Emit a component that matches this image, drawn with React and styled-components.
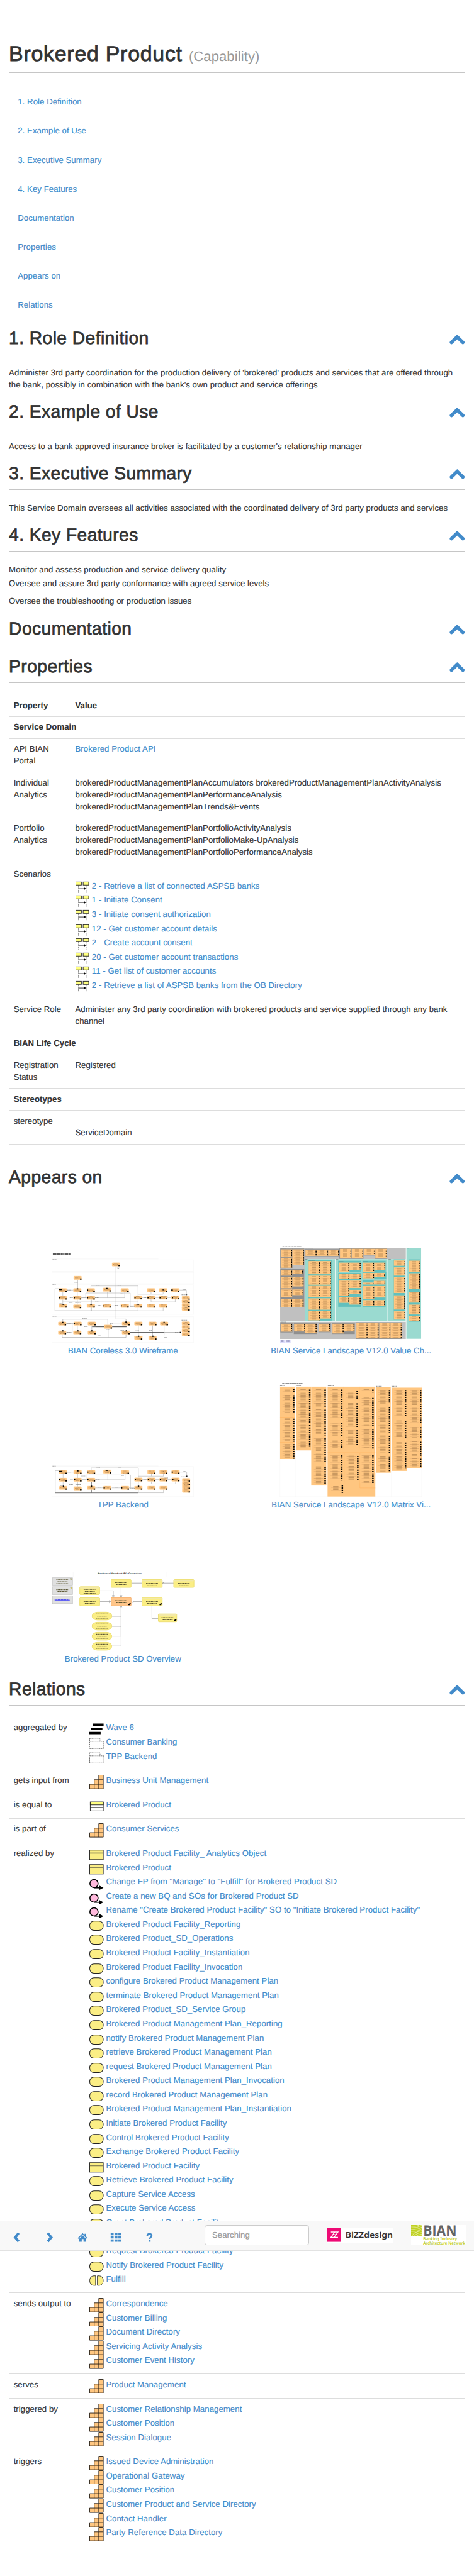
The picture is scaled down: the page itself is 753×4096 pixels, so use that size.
import React from "react";
import styled, { createGlobalStyle } from "styled-components";

const LINK = "#428bca";
const INK = "#333";
const NODE = "#ffc680";

const GlobalStyle = createGlobalStyle`
  body {
    margin: 0;
    background: #fff;
    color: ${INK};
    font-family: "Liberation Sans", Arial, sans-serif;
    font-size: 14px;
    line-height: 20px;
    letter-spacing: 0.08px;
    text-rendering: geometricPrecision;
    -webkit-text-stroke: 0.15px currentColor;
  }
  * { box-sizing: border-box; }
`;

const Page = styled.main`
  position: relative;
  zoom: 0.94125;
  width: 800px;
  min-height: 4352px;
  padding: 72.5px 15px 0;
  overflow: hidden;
`;

const Title = styled.h1`
  margin: 0;
  height: 50.5px;
  border-bottom: 1px solid #c6c6c6;
  font-size: 36px;
  line-height: 40px;
  font-weight: 400;
  letter-spacing: 0.8px;
  -webkit-text-stroke: 0.9px ${INK};
`;

const TitleKind = styled.small`
  font-size: 23.4px;
  line-height: 1;
  letter-spacing: 0.1px;
  color: #999;
  -webkit-text-stroke: 0;
`;

const SectionNav = styled.nav`
  display: flex;
  flex-direction: column;
  padding: 25px 15px 14.8px;
`;

const NavLink = styled.a`
  line-height: 49px;
  color: ${LINK};
  text-decoration: none;
`;

const SectionHeader = styled.header`
  display: flex;
  justify-content: space-between;
  align-items: flex-start;
  margin-top: ${(p) => p.$gap || 0}px;
  padding-bottom: 11px;
  border-bottom: 1px solid #c6c6c6;
`;

const SectionTitle = styled.h2`
  margin: 0;
  font-size: 30px;
  line-height: 33px;
  font-weight: 400;
  letter-spacing: 0.45px;
  -webkit-text-stroke: 0.8px ${INK};
`;

const Chevron = styled.svg`
  width: 26px;
  height: 17px;
  margin: 10px 0.5px 0 0;
`;

const Copy = styled.div`
  padding: 20.6px 0 18.4px;
  white-space: nowrap;
`;

const Line = styled.p`
  margin: ${(p) => p.$before || 0}px 0 0;
`;

const Table = styled.div`
  display: flex;
  flex-direction: column;
  margin-top: 20px;
`;

const Row = styled.div`
  display: grid;
  grid-template-columns: ${(p) => p.$label}px 1fr;
  padding: 8px 0;
  border-bottom: 1px solid #ddd;
`;

const Cell = styled.div`
  padding: 0 8px;
  font-weight: ${(p) => (p.$strong ? 700 : 400)};
  white-space: ${(p) => (p.$nowrap ? "nowrap" : "normal")};
`;

const GroupRow = styled.div`
  padding: 8px;
  border-bottom: 1px solid #ddd;
  font-weight: 700;
`;

const Link = styled.a`
  color: ${LINK};
  text-decoration: none;
`;

const ItemList = styled.ul`
  list-style: none;
  margin: ${(p) => p.$top || 0}px 0 0;
  padding: 0;
`;

const Item = styled.li`
  display: flex;
  gap: 4px;
  height: 24px;
  white-space: nowrap;
`;

const IconBox = styled.svg`
  flex: none;
  width: 24px;
  height: 24px;
`;

const Gallery = styled.div`
  display: grid;
  grid-template-columns: 1fr 1fr;
  grid-auto-rows: 260px;
  padding: 15.3px 0 23.7px;
`;

const Figure = styled.figure`
  display: flex;
  flex-direction: column;
  align-items: center;
  justify-content: flex-end;
  gap: 4px;
  margin: 0;
`;

const Drawing = styled.svg`
  display: block;
  width: ${(p) => p.$w}px;
  height: ${(p) => p.$h}px;
`;

const Toolbar = styled.div`
  position: absolute;
  left: 0;
  top: 3751px;
  display: flex;
  align-items: center;
  width: 800px;
  height: 51px;
  padding-left: 16px;
  background: #f8f8f8;
  border-bottom: 1px solid #e2e2e2;
`;

const ToolButtons = styled.div`
  display: flex;
  gap: 32px;
  padding-top: 8px;
`;

const ToolIcon = styled.svg`
  width: 24px;
  height: 18px;
  fill: ${LINK};
`;

const Search = styled.div`
  width: 177px;
  height: 34px;
  margin-left: 81px;
  padding: 6px 12px;
  border: 1px solid #ccc;
  border-radius: 4px;
  background: #fff;
  box-shadow: inset 0 1px 1px rgba(0, 0, 0, 0.075);
  color: #999;
`;

const Logo = styled.svg`
  width: ${(p) => p.$w}px;
  height: ${(p) => p.$h}px;
  margin-left: ${(p) => p.$left}px;
  background: #fff;
  overflow: visible;
  letter-spacing: 0;
  -webkit-text-stroke: 0;
`;

/* ---------- item icons ---------- */

const glyphs = {
  wave: (
    <path d="M5.3 2.7H24v4H5.3zM2.7 9.7H22v4H2.7zM0 16.7h19v4H0z" />
  ),
  group: (
    <g fill="none" stroke="#666" strokeDasharray="2 1.2">
      <path d="M.5 3v17.500M.5 3.300H18V8M.5 8.300H24M23.500 8V20.500M.5 20.500H24" />
    </g>
  ),
  capability: (
    <g fill={NODE} stroke="#2b2117">
      <path d="M15.800.5h7.700v23H.5v-7.500h7.700V8.300h7.600z" />
      <path d="M8.200 16H23.500M15.800 8.300H23.500M8.200 16v7.500M15.800 8.300v15.200" fill="none" />
    </g>
  ),
  entity: (
    <g stroke="#222">
      <rect x="1.500" y="4.500" width="22" height="15" fill="#fff" />
      <rect x="1.500" y="4.500" width="22" height="4.800" fill="#ffff80" />
      <path d="M1.500 14H23.500" />
    </g>
  ),
  object: (
    <g stroke="#222">
      <rect x=".5" y="4" width="23" height="16" fill="#fbee85" />
      <path d="M1 9H23" stroke="#8b8455" strokeWidth="1.800" />
    </g>
  ),
  work: (
    <g>
      <circle cx="7.800" cy="12.700" r="6.900" fill="#ffb9dc" stroke="#000" strokeWidth="1.700" />
      <path d="M8 19.900H17" stroke="#000" strokeWidth="1.800" />
      <path d="M16 15.800 23.800 19.900 16 24z" />
    </g>
  ),
  service: (
    <rect x=".6" y="4" width="22.800" height="15.600" rx="7" fill="#fbee85" stroke="#222" strokeWidth="1.100" />
  ),
  function: (
    <g fill="#fbee85" stroke="#222">
      <path d="M10.500 4H8C3 4 .6 7.500.6 12S3 20 8 20h2.500z" />
      <path d="M13.500 4H16c5 0 7.400 3.500 7.400 8S21 20 16 20h-2.500z" />
    </g>
  ),
  sequence: (
    <g stroke="#222">
      <rect x=".5" y="2.500" width="9.400" height="5.200" fill="#ffff80" />
      <rect x="12.900" y="2.500" width="9.400" height="5.200" fill="#ffff80" />
      <path d="M5.300 8v13M17.800 8v13" strokeDasharray="3 1" fill="none" />
      <path d="M5.500 13.900H15" />
      <path d="M14 11.500 17.800 13.900 14 16.300z" stroke="none" />
    </g>
  ),
};

function LinkItem({ icon, children }) {
  return (
    <Item>
      <IconBox viewBox="0 0 24 24">{glyphs[icon]}</IconBox>
      <Link>{children}</Link>
    </Item>
  );
}

function Section({ title, gap }) {
  return (
    <SectionHeader $gap={gap}>
      <SectionTitle>{title}</SectionTitle>
      <Chevron viewBox="0 0 26 17">
        <path
          d="M3.400 13.300 13 4 22.600 13.300"
          fill="none"
          stroke={LINK}
          strokeWidth="5.800"
          strokeLinejoin="miter"
          strokeLinecap="round"
        />
      </Chevron>
    </SectionHeader>
  );
}

/* ---------- thumbnails ---------- */

function FlowNode({ x, y }) {
  return (
    <g>
      <rect x={x - 13} y={y - 9} width="26" height="18" rx="3" fill={NODE} stroke="#ffd9a8" />
      <path
        d={`M${x - 7} ${y - 5}h14M${x - 9} ${y}h17M${x - 6} ${y + 5}h12`}
        stroke="#a07c50"
        strokeWidth="1.600"
        strokeDasharray="3 1"
      />
      <rect x={x + 8} y={y + 3} width="5" height="6" fill="#000" />
    </g>
  );
}

const coreNodes = [
  [209, 352], [257, 352], [302, 352], [355, 350], [414, 352], [501, 352], [541, 352], [581, 352],
  [209, 391], [257, 391], [302, 391], [458, 390], [501, 390], [541, 390], [581, 390],
  [209, 432], [257, 435], [302, 432], [355, 432], [414, 432], [458, 432], [501, 432], [541, 432],
  [616, 392], [616, 410], [616, 428], [616, 447],
];

const coreLines =
  "M183 345V457H458V440M183 345H209M222 352H245M302 345V331H458V382M270 391H285V367H432V432M270 391H302M302 391H414M414 360V391M357 360V391M209 360V432M257 360V435M302 400V457M209 412H458M501 360V373H458M541 360V373H501M541 412H581V398M501 412H541M315 432H342M370 432H400M427 432H445M470 390H490M513 390H530M553 390H570M541 440V457H458M593 352H618V376M458 398V432M501 398V412";

const coreMarks =
  "M196 346h10v6h-10zM255 343h5v6h-5zM289 349h4v6h-4zM352 341h5v5h-5zM196 388h4v6h-4zM245 388h4v6h-4zM289 388h4v6h-4zM446 388h4v6h-4zM489 388h4v6h-4zM529 388h4v6h-4zM570 388h4v6h-4zM300 421h5v6h-5zM456 421h5v6h-5zM208 421h4v6h-4zM343 429h4v6h-4zM401 429h4v6h-4zM539 349h4v4h-4zM568 349h5v6h-5zM616 371h4v6h-4z";

function CoreFlow() {
  return (
    <g>
      <path d={coreLines} fill="none" stroke="#999" strokeWidth="1.200" />
      <path d="M183 457.500H458M303 400V457" stroke="#444" strokeWidth="1.500" />
      {coreNodes.map(([x, y]) => (
        <FlowNode key={`${x}-${y}`} x={x} y={y} />
      ))}
      <path d={coreMarks} />
      <path
        d="M224 352h12M320 328h12M390 328h12M232 391h10M316 391h14M316 412h12M230 415h12M198 421h10M545 382h12M605 349h12M600 376h20M268 372h14M400 371h10M250 415h18M325 429h8M382 429h8M476 391h8M432 435h14"
        stroke="#888"
        strokeWidth="3"
        strokeDasharray="2 1"
      />
    </g>
  );
}

const lowerNodes = [
  [207, 522], [258, 522], [305, 522], [418, 522], [459, 522], [506, 522], [544, 522],
  [359, 538], [207, 567], [257, 567], [305, 567], [418, 567], [459, 594], [506, 594],
  [616, 521], [616, 539], [616, 557], [616, 575],
];

function WireframeThumb() {
  return (
    <Drawing $w={240.3} $h={152} viewBox="172 163 471 456" preserveAspectRatio="none">
      <path d="M176 169.500H234" stroke="#222" strokeWidth="5" strokeDasharray="7 1 4 1" />
      <g fill="none" stroke="#f0f0f0">
        <path d="M172.500 199H642V257H172.500zM172.500 262H642V320H172.500zM172.500 325H642V475H172.500zM172.500 487H642V617H172.500zM172.500 194H525" />
      </g>
      <path d="M173 197h17M173 260h13M173 323h13M173 485h17" stroke="#999" strokeWidth="3" strokeDasharray="2 1" />
      <path
        d="M385 230V499H418V514M258 299V345M209 514V500H358V530M220 522H245M240 522V567H220M257 530V560M305 530V560M318 538H346M372 538H418M207 575V592H418V575M359 547V592M367 530V519H405M459 530V585M506 530V585M544 530V582"
        fill="none"
        stroke="#999"
        strokeWidth="1.500"
      />
      <path d="M306 538H346M372 538H420M430 566.500H545" stroke="#333" strokeWidth="2" />
      <path d="M545 566.500H598" stroke="#888" strokeWidth="1.500" />
      <CoreFlow />
      <FlowNode x={385} y={222} />
      <FlowNode x={258} y={290} />
      {lowerNodes.map(([x, y]) => (
        <FlowNode key={`${x}-${y}`} x={x} y={y} />
      ))}
      <path d="M207 513h4v6h-4zM245 519h4v6h-4zM416 511h4v7h-4zM303 556h4v6h-4zM257 556h4v6h-4zM207 556h4v6h-4zM417 556h4v6h-4zM458 583h4v6h-4zM505 583h4v6h-4zM596 564h4v6h-4zM542 513h4v6h-4z" />
      <path
        d="M388 236h10M390 242h6M248 313h10M274 497h14M600 505h20M225 522h12M224 567h10M280 538h12M366 520h10M380 534h12M400 556h12M450 555h12M495 556h10M580 566h12M325 584h10M543 592h12M354 552h10"
        stroke="#888"
        strokeWidth="3"
        strokeDasharray="2 1"
      />
    </Drawing>
  );
}

function BackendThumb() {
  return (
    <Drawing $w={240.3} $h={53.3} viewBox="172 1237 471 160" preserveAspectRatio="none">
      <path d="M172.500 1243H642V1396H172.500zM172.500 1240H525" fill="none" stroke="#f0f0f0" />
      <path d="M173 1241h13" stroke="#999" strokeWidth="3" strokeDasharray="2 1" />
      <g transform="translate(1 919)">
        <CoreFlow />
      </g>
    </Drawing>
  );
}

function Block({ box, step = 8.5, line = 1.6 }) {
  const [x, y, w, h] = box;
  return (
    <g>
      <rect x={x} y={y} width={w} height={h} fill={NODE} />
      <path
        d={`M${x + w * 0.46} ${y + 3}V${y + h - 2}`}
        stroke="#b98a55"
        strokeWidth={w * 0.38}
        strokeDasharray={`${line} ${step / 2 - line}`}
      />
      <path
        d={`M${x + w * 0.46} ${y + 5}V${y + h - 2}`}
        stroke="#c99863"
        strokeWidth={w * 0.66}
        strokeDasharray={`1 ${step - 1}`}
      />
      <path
        d={`M${x + w - 3} ${y + 4}V${y + h - 1}`}
        stroke="#000"
        strokeWidth="5"
        strokeDasharray={`${step * 0.55} ${step * 0.45}`}
      />
    </g>
  );
}

const grayAreas = [[24, 33, 125, 372], [149, 33, 512, 58], [24, 408, 637, 87]];
const darkGrayAreas = [
  [25, 37, 62, 98], [85, 37, 61, 83], [25, 140, 121, 193], [149, 40, 176, 36], [324, 36, 62, 53],
  [385, 36, 61, 53], [446, 36, 60, 36], [504, 36, 62, 53], [25, 414, 62, 48], [93, 414, 119, 56],
  [218, 414, 63, 47], [287, 414, 115, 56], [408, 411, 233, 84],
];
const tealAreas = [[149, 91, 153, 314], [305, 91, 263, 314], [570, 91, 90, 314], [663, 33, 75, 461]];
const darkTealAreas = [
  [167, 94, 118, 308], [318, 99, 117, 58], [318, 160, 117, 172], [441, 99, 117, 57],
  [441, 155, 120, 37], [441, 195, 117, 137], [599, 92, 59, 306], [674, 92, 60, 315],
];
const landscapeBlocks = [
  [27, 41, 58, 40], [86, 41, 59, 78], [27, 85, 58, 49], [27, 145, 58, 29], [86, 145, 55, 20],
  [27, 181, 58, 57], [86, 181, 57, 48], [27, 244, 58, 38], [86, 244, 56, 29], [27, 292, 58, 41],
  [85, 292, 58, 41], [152, 43, 57, 31], [209, 43, 57, 31], [267, 43, 56, 31], [327, 38, 58, 49],
  [387, 38, 58, 49], [447, 38, 57, 31], [506, 38, 58, 49], [168, 100, 58, 67], [226, 100, 56, 67],
  [168, 174, 58, 46], [226, 174, 56, 46], [168, 226, 58, 56], [226, 226, 56, 56], [168, 289, 58, 58],
  [226, 289, 56, 58], [168, 353, 58, 48], [226, 353, 56, 39], [321, 108, 54, 47], [375, 108, 57, 38],
  [321, 165, 54, 27], [375, 165, 57, 27], [321, 199, 54, 77], [375, 199, 57, 38], [375, 246, 57, 20],
  [321, 283, 54, 29], [375, 283, 57, 38], [444, 108, 56, 46], [500, 108, 57, 37], [444, 160, 56, 28],
  [500, 160, 56, 20], [498, 200, 59, 19], [444, 209, 54, 10], [444, 227, 57, 65], [501, 227, 56, 58],
  [444, 298, 57, 29], [501, 298, 55, 29], [600, 97, 58, 27], [600, 132, 58, 42], [600, 182, 58, 80],
  [600, 274, 58, 72], [600, 355, 58, 42], [675, 98, 58, 57], [675, 162, 58, 80], [675, 256, 58, 55],
  [675, 321, 58, 50], [675, 379, 58, 25], [27, 418, 58, 40], [95, 418, 56, 39], [151, 418, 58, 48],
  [220, 418, 58, 40], [289, 418, 57, 49], [346, 418, 55, 39], [410, 414, 57, 78], [467, 414, 56, 78],
  [526, 414, 57, 78], [583, 414, 57, 78],
];

function areas(list, fill) {
  return list.map(([x, y, width, height]) => (
    <rect key={`${x}-${y}`} x={x} y={y} width={width} height={height} fill={fill} />
  ));
}

function LandscapeThumb() {
  return (
    <Drawing $w={238.7} $h={165} viewBox="24 20 716 495">
      <path d="M36 25.500H132" stroke="#333" strokeWidth="3.500" strokeDasharray="8 2 5 1" />
      {areas(grayAreas, "#c0c0c0")}
      {areas(darkGrayAreas, "#8f8f8f")}
      {areas(tealAreas, "#9adad0")}
      {areas(darkTealAreas, "#62c0bd")}
      <path d="M303.500 91V405M569 91V405M661.500 33V495M24 406.500H661" stroke="#e6f3f1" strokeWidth="2" />
      {landscapeBlocks.map((box) => (
        <Block key={box.join("-")} box={box} />
      ))}
      <path d="M26 35h26M151 35h40M665 35h12M151 92h12M307 92h12M571 92h14M26 139h26M322 103h22M444 103h22M170 97h30M26 409h28" stroke="#555" strokeWidth="2" strokeDasharray="3 1" />
      <path d="M24 498h25v16H24zM51 498h26v16H51z" fill="#dcdcfa" />
      <path d="M30 506h12M57 506h14" stroke="#9a9ac0" strokeWidth="9" strokeDasharray="3 1" />
    </Drawing>
  );
}

const matrixPanels = [
  [928, 835, 49, 367], [981, 835, 50, 323], [1031, 835, 50, 501], [1085, 835, 158, 557],
  [1245, 838, 49, 433], [1298, 840, 49, 422], [1347, 840, 50, 407],
];
const matrixColumns = [
  [930, 842, 46, 20], [930, 874, 46, 96], [930, 993, 46, 122], [930, 1122, 46, 79],
  [983, 846, 46, 172], [983, 1026, 46, 122], [1034, 846, 46, 92], [1034, 948, 46, 135],
  [1034, 1092, 46, 132], [1034, 1236, 46, 92], [1089, 846, 46, 156], [1089, 1016, 46, 70],
  [1089, 1100, 46, 50], [1141, 852, 45, 50], [1141, 916, 45, 124], [1141, 1052, 45, 86],
  [1192, 846, 46, 20], [1192, 888, 46, 146], [1192, 1046, 46, 104], [1089, 1178, 46, 134],
  [1142, 1182, 46, 128], [1192, 1178, 46, 146], [1091, 1330, 46, 44], [1247, 848, 46, 76],
  [1247, 934, 46, 134], [1247, 1080, 46, 92], [1247, 1184, 46, 84], [1300, 848, 46, 136],
  [1300, 1004, 46, 92], [1300, 1114, 46, 144], [1351, 848, 45, 178], [1351, 1036, 45, 62],
  [1351, 1110, 45, 76], [1351, 1196, 45, 50],
];

function MatrixThumb() {
  return (
    <Drawing $w={240.8} $h={194} viewBox="926 813 472 582" preserveAspectRatio="none">
      <path d="M935 819.500H1005" stroke="#222" strokeWidth="4" strokeDasharray="6 1 4 1" />
      <path d="M927.500 828V1393H1397M980 828V1393M1296 830V1393M1396.500 830V1393" fill="none" stroke="#f1f1f1" />
      <path d="M928 830h14M983 830h14M1086 830h20M1246 833h18M1299 833h14" stroke="#999" strokeWidth="4" strokeDasharray="3 1" />
      {areas(matrixPanels, NODE)}
      <path d="M1085 1167H1243M1139 835V1150M1190 835V1150M1140 1172V1320M1192 1172V1348H1243M928 990H977M928 1118H977" fill="none" stroke="#ffb868" strokeWidth="2" />
      {matrixColumns.map((box) => (
        <Block key={box.join("-")} box={box} step={11.5} line={2.2} />
      ))}
    </Drawing>
  );
}

function Card({ x, y, w, h, fill = "#fbee85", edge = "#eadb62", round = 3, lines = 3, head, mark }) {
  const cx = x + w / 2;
  const first = y + h / 2 - (lines - 1) * 5 + (head ? 4 : 0);
  return (
    <g>
      <rect x={x} y={y} width={w} height={h} rx={round} fill={fill} stroke={edge} strokeWidth="2" />
      {head && <rect x={x + 1} y={y + 2} width={w - 2} height="7" fill="#f3e9a6" />}
      {Array.from({ length: lines }, (_, i) => (
        <path
          key={i}
          d={`M${cx - 20 + (i % 2) * 4} ${first + i * 10}H${cx + 20 - (i % 2) * 3}`}
          stroke="#5b5633"
          strokeWidth="4"
          strokeDasharray="4 1 2 1"
        />
      ))}
      {mark && <path d={`M${x + w - 9} ${y + h - 3}v-5l4-5h4v5l-4 5z`} />}
    </g>
  );
}

function OverviewThumb() {
  const gray = { fill: "#e0e0e0", edge: "#bdbdbd", w: 67, h: 40, x: 173, round: 0 };
  return (
    <Drawing $w={241.3} $h={133.7} viewBox="171 399 473 401" preserveAspectRatio="none">
      <rect x="242" y="401" width="308" height="26" fill="#fff" stroke="#eee" />
      <text x="323" y="413" fontSize="11" fontWeight="700" letterSpacing="0" textLength="145" lengthAdjust="spacingAndGlyphs" fill="#111">
        Brokered Product SD Overview
      </text>
      <g fill="none" stroke="#666" strokeWidth="1.300">
        <path d="M435 457H469M537 457H575M331 496H375V520M401 480V520M331 550H362M441 550H469M503 578V637H523M371 625H401M371 676H401M371 726H401M371 776H401V580" />
        <path d="M401 580V726" strokeWidth="2" />
        <path d="M371 520h8l-4 9zM397 520h8l-4 9zM362 545v12l5-6zM441 545v12l-6-6zM397 580h8l-4-9zM503 571v10M538 457l4-4v8z" fill="#fff" />
      </g>
      <Card {...gray} y={430} />
      <Card {...gray} y={475} lines={2} />
      <Card {...gray} y={521} lines={0} />
      <path d="M181 540.500H231" stroke="#5555ee" strokeWidth="5" strokeDasharray="4 1" />
      <path d="M181 544H231" stroke="#2222ff" strokeWidth="1.500" />
      <path d="M232 433h5v8h-3zM233 478h5v8h-3z" fill="#eadb62" stroke="#777" />
      <Card x={368} y={439} w={66} h={40} lines={2} />
      <Card x={470} y={439} w={67} h={40} lines={2} head />
      <Card x={575} y={439} w={67} h={40} lines={2} head />
      <Card x={264} y={475} w={66} h={40} head />
      <Card x={264} y={531} w={66} h={41} lines={2} head />
      <Card x={368} y={530} w={66} h={42} lines={2} fill="#ffc68a" edge="#f3a862" mark />
      <Card x={470} y={530} w={67} h={42} lines={2} head mark />
      <Card x={524} y={613} w={61} h={40} lines={2} head mark />
      {[604, 655, 706, 757].map((y) => (
        <Card key={y} x={305} y={y} w={65} h={40} round={18} />
      ))}
    </Drawing>
  );
}

const figures = [
  ["BIAN Coreless 3.0 Wireframe", WireframeThumb],
  ["BIAN Service Landscape V12.0 Value Ch...", LandscapeThumb],
  ["TPP Backend", BackendThumb],
  ["BIAN Service Landscape V12.0 Matrix Vi...", MatrixThumb],
  ["Brokered Product SD Overview", OverviewThumb],
];

/* ---------- content ---------- */

const navItems = [
  "1. Role Definition", "2. Example of Use", "3. Executive Summary", "4. Key Features",
  "Documentation", "Properties", "Appears on", "Relations",
];

const scenarios = [
  "2 - Retrieve a list of connected ASPSB banks",
  "1 - Initiate Consent",
  "3 - Initiate consent authorization",
  "12 - Get customer account details",
  "2 - Create account consent",
  "20 - Get customer account transactions",
  "11 - Get list of customer accounts",
  "2 - Retrieve a list of ASPSB banks from the OB Directory",
];

const all = (icon, names) => names.map((name) => [icon, name]);

const relations = [
  ["aggregated by", [["wave", "Wave 6"], ["group", "Consumer Banking"], ["group", "TPP Backend"]]],
  ["gets input from", [["capability", "Business Unit Management"]]],
  ["is equal to", [["entity", "Brokered Product"]]],
  ["is part of", [["capability", "Consumer Services"]]],
  ["realized by", [
    ...all("object", ["Brokered Product Facility_ Analytics Object", "Brokered Product"]),
    ...all("work", [
      'Change FP from "Manage" to "Fulfill" for Brokered Product SD',
      "Create a new BQ and SOs for Brokered Product SD",
      'Rename "Create Brokered Product Facility" SO to "Initiate Brokered Product Facility"',
    ]),
    ...all("service", [
      "Brokered Product Facility_Reporting",
      "Brokered Product_SD_Operations",
      "Brokered Product Facility_Instantiation",
      "Brokered Product Facility_Invocation",
      "configure Brokered Product Management Plan",
      "terminate Brokered Product Management Plan",
      "Brokered Product_SD_Service Group",
      "Brokered Product Management Plan_Reporting",
      "notify Brokered Product Management Plan",
      "retrieve Brokered Product Management Plan",
      "request Brokered Product Management Plan",
      "Brokered Product Management Plan_Invocation",
      "record Brokered Product Management Plan",
      "Brokered Product Management Plan_Instantiation",
      "Initiate Brokered Product Facility",
      "Control Brokered Product Facility",
      "Exchange Brokered Product Facility",
    ]),
    ["object", "Brokered Product Facility"],
    ...all("service", [
      "Retrieve Brokered Product Facility",
      "Capture Service Access",
      "Execute Service Access",
      "Grant Brokered Product Facility",
      "",
      "Request Brokered Product Facility",
      "Notify Brokered Product Facility",
    ]),
    ["function", "Fulfill"],
  ]],
  ["sends output to", all("capability", [
    "Correspondence", "Customer Billing", "Document Directory",
    "Servicing Activity Analysis", "Customer Event History",
  ])],
  ["serves", all("capability", ["Product Management"])],
  ["triggered by", all("capability", [
    "Customer Relationship Management", "Customer Position", "Session Dialogue",
  ])],
  ["triggers", all("capability", [
    "Issued Device Administration", "Operational Gateway", "Customer Position",
    "Customer Product and Service Directory", "Contact Handler", "Party Reference Data Directory",
  ])],
];

function Property({ name, strong, children }) {
  return (
    <Row $label={104}>
      <Cell $strong={strong}>{name}</Cell>
      <Cell $strong={strong} $nowrap>{children}</Cell>
    </Row>
  );
}

function TopToolbar() {
  return (
    <Toolbar>
      <ToolButtons>
        <ToolIcon viewBox="0 0 24 18">
          <path d="M13.800.8 17.200 3 12.700 9l4.500 6-3.400 2.200L7 9z" />
        </ToolIcon>
        <ToolIcon viewBox="0 0 24 18">
          <path d="M10.200.8 6.800 3l4.500 6-4.500 6 3.400 2.200L17 9z" />
        </ToolIcon>
        <ToolIcon viewBox="0 0 24 18">
          <path d="M12 1.800 3.500 10.300l1.300 1L12 4.400l7.200 6.900 1.300-1-3-3V2.800h-2.300V5zM12 5.800 6.200 11.300V16.500h4.300v-4.500h3v4.500h4.300v-5.200z" />
        </ToolIcon>
        <ToolIcon viewBox="0 0 24 18">
          <path d="M3 1.500h5v4H3zM9.500 1.500h5v4h-5zM16 1.500h5v4h-5zM3 7h5v4H3zM9.500 7h5v4h-5zM16 7h5v4h-5zM3 12.500h5v4H3zM9.500 12.500h5v4h-5zM16 12.500h5v4h-5z" />
        </ToolIcon>
        <ToolIcon viewBox="0 0 24 18">
          <path
            d="M8.500 6.500C8.500 4 10 3.200 12.200 3.200c2.300 0 3.600 1.200 3.600 3 0 2.500-3.300 2.600-3.300 5.600"
            fill="none"
            stroke={LINK}
            strokeWidth="2.800"
          />
          <path d="M11 13.500h3v3h-3z" />
        </ToolIcon>
      </ToolButtons>
      <Search>Searching</Search>
      <Logo $w={111} $h={25} $left={31} viewBox="0 0 111 25">
        <rect y="1" width="23" height="23" fill="#ee0a75" />
        <path
          d="M6 7.500h6.500L6 16.500h6.500M11.500 7.500H18l-6.500 9H18M8 12h8"
          fill="none"
          stroke="#fff"
          strokeWidth="1.500"
        />
        <text x="30.500" y="16.500" fontFamily="Noto Sans, sans-serif" fontWeight="600" fontSize="13.500" textLength="80" lengthAdjust="spacingAndGlyphs" fill="#33302e">
          BiZZdesign
        </text>
      </Logo>
      <Logo $w={92} $h={34.5} $left={30} viewBox="0 0 92 34.500">
        <rect width="18" height="18" fill="#bfd022" />
        <g fill="none" stroke="#f0f5c0" strokeWidth="0.800">
          <path d="M0 4.500Q10 5.500 18 .5M0 7.500Q11 8.500 18 3.500M0 10.500Q12 11.500 18 6.500M2 18Q4 12 18 9.500M6 18Q8 14 18 12.500M10 18Q12 16 18 15.500M0 13.500Q4 14 8 12.500M0 2Q8 3 14 0" />
        </g>
        <text x="20.500" y="18" fontFamily="Open Sans, sans-serif" fontWeight="700" fontSize="24.500" textLength="56.500" lengthAdjust="spacingAndGlyphs" fill="#636466">
          BIAN
        </text>
        <g fontFamily="Noto Sans, sans-serif" fontWeight="600" fontSize="7" fill="#bccb1c">
          <text x="20.500" y="26" textLength="57" lengthAdjust="spacingAndGlyphs">Banking Industry</text>
          <text x="20.500" y="33.200" textLength="71" lengthAdjust="spacingAndGlyphs">Architecture Network</text>
        </g>
      </Logo>
    </Toolbar>
  );
}

export default function App() {
  return (
    <>
      <GlobalStyle />
      <Page>
        <Title>
          Brokered Product <TitleKind>(Capability)</TitleKind>
        </Title>
        <SectionNav>
          {navItems.map((name) => (
            <NavLink key={name}>{name}</NavLink>
          ))}
        </SectionNav>

        <Section title="1. Role Definition" />
        <Copy>
          <Line>
            Administer 3rd party coordination for the production delivery of 'brokered' products and services that are offered through
            <br />
            the bank, possibly in combination with the bank's own product and service offerings
          </Line>
        </Copy>
        <Section title="2. Example of Use" />
        <Copy>
          <Line>Access to a bank approved insurance broker is facilitated by a customer's relationship manager</Line>
        </Copy>
        <Section title="3. Executive Summary" />
        <Copy>
          <Line>This Service Domain oversees all activities associated with the coordinated delivery of 3rd party products and services</Line>
        </Copy>
        <Section title="4. Key Features" />
        <Copy>
          <Line>Monitor and assess production and service delivery quality</Line>
          <Line $before={4}>Oversee and assure 3rd party conformance with agreed service levels</Line>
          <Line $before={10}>Oversee the troubleshooting or production issues</Line>
        </Copy>
        <Section title="Documentation" />
        <Section title="Properties" gap={19} />

        <Table>
          <Property name="Property" strong>Value</Property>
          <GroupRow>Service Domain</GroupRow>
          <Property name="API BIAN Portal">
            <Link>Brokered Product API</Link>
          </Property>
          <Property name="Individual Analytics">
            brokeredProductManagementPlanAccumulators brokeredProductManagementPlanActivityAnalysis
            <br />
            brokeredProductManagementPlanPerformanceAnalysis
            <br />
            brokeredProductManagementPlanTrends&amp;Events
          </Property>
          <Property name="Portfolio Analytics">
            brokeredProductManagementPlanPortfolioActivityAnalysis
            <br />
            brokeredProductManagementPlanPortfolioMake-UpAnalysis
            <br />
            brokeredProductManagementPlanPortfolioPerformanceAnalysis
          </Property>
          <Property name="Scenarios">
            <ItemList $top={20}>
              {scenarios.map((name) => (
                <LinkItem key={name} icon="sequence">{name}</LinkItem>
              ))}
            </ItemList>
          </Property>
          <Property name="Service Role">
            Administer any 3rd party coordination with brokered products and service supplied through any bank
            <br />
            channel
          </Property>
          <GroupRow>BIAN Life Cycle</GroupRow>
          <Property name="Registration Status">Registered</Property>
          <GroupRow>Stereotypes</GroupRow>
          <Property name="stereotype">
            <br />
            ServiceDomain
          </Property>
        </Table>

        <Section title="Appears on" gap={39} />
        <Gallery>
          {figures.map(([name, Thumb]) => (
            <Figure key={name}>
              <Thumb />
              <Link>{name}</Link>
            </Figure>
          ))}
        </Gallery>

        <Section title="Relations" />
        <Table>
          {relations.map(([label, items]) => (
            <Row key={label} $label={128}>
              <Cell>{label}</Cell>
              <Cell>
                <ItemList>
                  {items.map(([icon, name], i) => (
                    <LinkItem key={i} icon={icon}>{name}</LinkItem>
                  ))}
                </ItemList>
              </Cell>
            </Row>
          ))}
        </Table>
        <TopToolbar />
      </Page>
    </>
  );
}
